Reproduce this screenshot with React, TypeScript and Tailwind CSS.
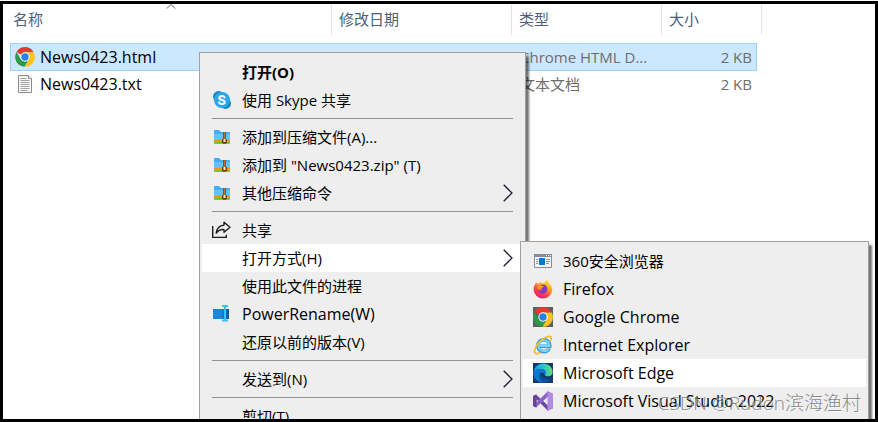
import type { ReactNode } from "react";
import clsx from "clsx";

function ChromeIcon({ boxed = false }: { boxed?: boolean }) {
  return (
    <svg viewBox="0 0 20 20" className="size-5" aria-hidden="true">
      {boxed && <rect width="20" height="20" fill="#5d5f62" />}
      <path d="M10 10 1.5 5A9.8 9.8 0 0 1 18.6 5.2L10 5.4Z" fill="#e33b2e" />
      <path d="M10 10 6 12.4 1.5 5A9.8 9.8 0 0 0 9.6 19.8L14 12.3Z" fill="#2a9a48" />
      <path d="M10 5.4H18.7A9.8 9.8 0 0 1 9.6 19.8L14 12.3Z" fill="#fcc31e" />
      <circle cx="10" cy="10" r="4.7" fill="#fff" />
      <circle cx="10" cy="10" r="3.7" fill="#2d7de9" />
    </svg>
  );
}

function TextFileIcon() {
  return (
    <svg viewBox="0 0 20 20" className="size-5" aria-hidden="true">
      <path d="M3.5 1.5h10l3 3v14h-13z" fill="#f7f7f7" stroke="#8c8c8c" />
      <path d="M13.5 1.5v3h3" fill="#fff" stroke="#8c8c8c" />
      <path d="M5.5 4.5h6M5.5 6.5h9M5.5 8.5h9M5.5 10.5h9M5.5 12.5h9M5.5 14.5h9M5.5 16.5h7" stroke="#a3a3a3" />
    </svg>
  );
}

function SkypeIcon() {
  return (
    <svg viewBox="0 0 20 20" className="size-5" aria-hidden="true">
      <circle cx="6.6" cy="6.6" r="5.6" fill="#1686c4" />
      <circle cx="13.4" cy="13.4" r="5.6" fill="#1583bd" />
      <circle cx="10" cy="10" r="8" fill="#28a8ea" />
      <path
        d="M12.6 7.4c-.5-1-1.5-1.3-2.7-1.3-1.5 0-2.6.7-2.6 1.9 0 2.8 5.500 1.200 5.500 4 0 1.300-1.200 2-2.800 2-1.400 0-2.500-.5-2.900-1.600"
        fill="none"
        stroke="#fff"
        strokeWidth="2"
        strokeLinecap="round"
      />
    </svg>
  );
}

function ZipIcon() {
  return (
    <svg viewBox="0 0 20 20" className="size-5" aria-hidden="true">
      <path d="M2 4Q2 3 3 3h4l2 2h8q1 0 1 1v8H2z" fill="#42aff4" />
      <path d="M2 7h16v7H2z" fill="#5fc4fb" />
      <path d="M2 13h16v2H2z" fill="#f7930f" />
      <path d="M2 15h16v1q0 1-1 1H3q-1 0-1-1z" fill="#7cc52e" />
      <path d="M11 5h3v12h-3z" fill="#9a4c1b" />
      <path d="M12.5 5.5v7" stroke="#d89456" strokeDasharray="1 1" />
      <rect x="10" y="12" width="5" height="4" fill="#7a3a12" />
      <rect x="11.5" y="12" width="2" height="3" fill="#ffe9b8" />
    </svg>
  );
}

function ShareIcon() {
  return (
    <svg viewBox="0 0 20 20" className="size-5" fill="none" stroke="#1c1c1c" strokeWidth="1.400" aria-hidden="true">
      <path d="M.7 6v11.400h13.600v-2.600" />
      <path d="M12 2.200 18 7.300l-6 5V9.600C8.500 9.300 6.200 10.500 4.200 13.200 4.700 8.600 7.600 5.500 12 5.100z" strokeLinejoin="round" />
    </svg>
  );
}

function RenameIcon() {
  return (
    <svg viewBox="0 0 20 20" className="size-5" aria-hidden="true">
      <rect x="1" y="5" width="16" height="10" fill="#1479cf" />
      <path d="M1 5h9v10H1z" fill="#1b86da" />
      <path d="M14.5 5H17v10h-2.500z" fill="#0c5aa8" />
      <path d="M10 2h6M13 2v14M10 16.500h6" fill="none" stroke="#3cc0f3" strokeWidth="2" />
    </svg>
  );
}

function BrowserWindowIcon() {
  return (
    <svg viewBox="0 0 20 20" className="size-5" aria-hidden="true">
      <path d="M1.5 3.5h17v13h-17z" fill="#f8f8f8" stroke="#848b91" />
      <path d="M1 3h18v3H1z" fill="#848b91" />
      <path d="M13 4.5h1M15 4.5h1M17 4.5h1" stroke="#fff" />
      <rect x="6" y="7" width="6" height="7" fill="#0878d8" />
      <path d="M3 8.5h2M3 10.5h2M3 12.5h2M13 8.5h4M13 10.5h4M13 12.5h3" stroke="#8a8f94" />
    </svg>
  );
}

function FirefoxIcon() {
  return (
    <svg viewBox="0 0 20 20" className="size-5" aria-hidden="true">
      <defs>
        <linearGradient id="fox" x1=".8" y1="0" x2=".25" y2="1">
          <stop offset="0" stopColor="#fff14a" />
          <stop offset=".35" stopColor="#ffab20" />
          <stop offset=".65" stopColor="#ff4a3b" />
          <stop offset="1" stopColor="#ef128a" />
        </linearGradient>
      </defs>
      <path
        d="M13 .2c2 1.500 2.700 2.700 3.200 4.200 2.400 1.700 3.400 4.500 3 7.300A9.300 9.300 0 0 1 10 19.500 9.400 9.400 0 0 1 .6 10.700C.5 8.600 1 6.800 2.300 5l.6-1.800 1.700 1.600 2-.6.7-1.400c.6.9 1.400 1.400 2.500 1.700C11.600 3.800 12.700 2.300 13 .2z"
        fill="url(#fox)"
      />
      <path d="M8 6.200c3.500-1.500 6.500 1 6.300 4.200-.2 2.800-2.300 4.400-4.600 4.300-2.700-.1-4.300-1.800-4.300-3.800 1.300.9 3 .8 4.300-.4L7.200 8.800z" fill="#7b3bd0" />
      <path d="M4.800 6.200c1.300-.5 2.700-.2 3.500.6l2.600.5c-.4 1.200-2 1.300-2.500 1.700-.2 1.200-1.500 1.800-3 1.600-.8-1.300-1.200-2.800-.6-4.400z" fill="#ff9824" />
    </svg>
  );
}

function ExplorerIcon() {
  return (
    <svg viewBox="0 0 20 20" className="size-5" fill="none" aria-hidden="true">
      <path d="M16.200 13.200c-1 2.200-2.900 3.400-5.300 3.400-3.600 0-6-2.500-6-5.800s2.500-5.900 6-5.900 5.900 2.400 5.900 6.400H7" stroke="#2b9ddd" strokeWidth="3.600" />
      <path d="M15.800 13.200c-1 2-2.700 3-4.900 3-3.300 0-5.500-2.300-5.500-5.400s2.300-5.500 5.500-5.500 5.500 2.300 5.500 5.600H7" stroke="#7dd6f7" strokeWidth="2" />
      <path d="M16.800 6.500c1.800-2.800 1.900-5-.2-5.200C12.800 1 6.800 5.500 3.600 10.500.9 14.900.8 18.700 3.600 18.700c1.200 0 2.500-.5 4-1.500" stroke="#f2bd27" strokeWidth="1.700" />
    </svg>
  );
}

function EdgeIcon() {
  return (
    <svg viewBox="0 0 20 20" className="size-5" aria-hidden="true">
      <defs>
        <linearGradient id="edge" x1="0" y1=".5" x2="1" y2=".4">
          <stop offset="0" stopColor="#1597df" />
          <stop offset=".55" stopColor="#28c5d6" />
          <stop offset="1" stopColor="#6be35c" />
        </linearGradient>
      </defs>
      <rect width="20" height="20" fill="#143a6b" />
      <path d="M.4 10A9.600 9.600 0 0 1 10 .4c5.500 0 9.600 4 9.600 8.300 0 3-2 4.600-4.500 4.600-2 0-3.300-.7-3.300-1.500 0-.6.8-1 .8-2.400 0-1.700-1.700-3.300-4.500-3.300C4.200 6.100 1.400 7.600.4 10z" fill="url(#edge)" />
      <path d="M.4 10C1 7.500 4 6 7.500 6c2.800 0 5.100 1.500 5.100 3.400 0 1.400-.8 1.800-.8 2.400C10.800 9.800 9.300 9 7.800 10c-3 2-1.300 8.600 3.700 9.500A9.600 9.600 0 0 1 .4 10z" fill="#0d78d4" />
      <path d="M7.800 10c-2.700 2-1.200 8.500 4 9.400 2.700-.3 4.900-1.700 6.400-4-4 1.900-9.900.4-10.400-5.400z" fill="#0a4fa5" />
    </svg>
  );
}

function VisualStudioIcon() {
  return (
    <svg viewBox="0 0 20 20" className="size-5" aria-hidden="true">
      <path d="M0 5 3 3.500 15 14.500V20L3.500 8.300V13L0 15z" fill="#6d489f" />
      <path d="M0 15 3 16.500 15 5.500V0L3.500 11.500 1.500 13z" fill="#8b63c7" />
      <path d="M14.500 0 20 2.500v15L14.500 20z" fill="#b18ae4" />
      <path d="M0 5 3.500 3.500v13L0 15z" fill="#6a4499" />
    </svg>
  );
}

type Entry = {
  label: string;
  icon?: ReactNode;
  bold?: boolean;
  active?: boolean;
  submenu?: boolean;
  latin?: boolean;
};

// Each inner list is a group, groups are split by a rule.
const contextGroups: Entry[][] = [
  [
    { label: "打开(O)", bold: true },
    { label: "使用 Skype 共享", icon: <SkypeIcon /> },
  ],
  [
    { label: "添加到压缩文件(A)...", icon: <ZipIcon /> },
    { label: '添加到 "News0423.zip" (T)', icon: <ZipIcon /> },
    { label: "其他压缩命令", icon: <ZipIcon />, submenu: true },
  ],
  [
    { label: "共享", icon: <ShareIcon /> },
    { label: "打开方式(H)", active: true, submenu: true },
    { label: "使用此文件的进程" },
    { label: "PowerRename(W)", icon: <RenameIcon />, latin: true },
    { label: "还原以前的版本(V)" },
  ],
  [{ label: "发送到(N)", submenu: true }],
  [{ label: "剪切(T)" }],
];

const openWithGroups: Entry[][] = [
  [
    { label: "360安全浏览器", icon: <BrowserWindowIcon /> },
    { label: "Firefox", icon: <FirefoxIcon />, latin: true },
    { label: "Google Chrome", icon: <ChromeIcon boxed />, latin: true },
    { label: "Internet Explorer", icon: <ExplorerIcon />, latin: true },
    { label: "Microsoft Edge", icon: <EdgeIcon />, active: true, latin: true },
    { label: "Microsoft Visual Studio 2022", icon: <VisualStudioIcon />, latin: true },
  ],
];

const files = [
  { name: "News0423.html", type: "Chrome HTML D...", size: "2 KB", icon: <ChromeIcon />, selected: true },
  { name: "News0423.txt", type: "文本文档", size: "2 KB", icon: <TextFileIcon />, selected: false },
];

function MenuItem({ label, icon, bold, active, submenu, latin }: Entry) {
  return (
    <button
      type="button"
      role="menuitem"
      aria-haspopup={submenu ? "menu" : undefined}
      className={clsx(
        "flex h-7 w-full items-center gap-2.5 px-2.5 text-left whitespace-nowrap text-black",
        active && "bg-white",
        bold && "font-bold",
        latin && "text-[16px]",
      )}
    >
      <span className="size-5 shrink-0">{icon}</span>
      <span className="flex-1">{label}</span>
      {submenu && (
        <svg viewBox="0 0 10 18" className="h-[18px] w-2.5" fill="none" stroke="#1c1c34" strokeWidth="1.300" aria-hidden="true">
          <path d="M.7.8 9 9 .7 17.200" />
        </svg>
      )}
    </button>
  );
}

function Menu({ groups, label, className }: { groups: Entry[][]; label: string; className: string }) {
  return (
    <div
      role="menu"
      aria-label={label}
      className={clsx(
        "absolute border border-[#a0a0a0] bg-[#eeeeee] px-0.5 pt-[5px] shadow-[3px_4px_2px_rgba(0,0,0,0.55)]",
        className,
      )}
    >
      {groups.map((group, i) => (
        <div key={i} role="group">
          {i > 0 && <hr className="mx-2.5 my-1 border-t border-[#919191]" />}
          {group.map((entry) => (
            <MenuItem key={entry.label} {...entry} />
          ))}
        </div>
      ))}
    </div>
  );
}

function HeaderCell({ label, className, sorted }: { label: string; className: string; sorted?: boolean }) {
  return (
    <th scope="col" aria-sort={sorted ? "ascending" : undefined} className={clsx("p-0 pb-2 text-left font-normal", className)}>
      <div className="relative flex h-[31px] items-center border-r border-[#e5e5e5] pb-0.5 text-[#4c607a]">
        <button type="button" className={sorted ? "pl-[3px]" : "pl-[7px]"}>
          {label}
        </button>
        {sorted && (
          <svg viewBox="0 0 10 5" className="absolute top-0 left-1/2 h-[5px] w-2.5 -translate-x-1/2" fill="none" stroke="#6e6e6e" aria-hidden="true">
            <path d="M.5 4.700 5 .5l4.500 4.200" />
          </svg>
        )}
      </div>
    </th>
  );
}

function FileList() {
  return (
    <table className="ml-[7px] w-[752px] table-fixed border-collapse">
      <thead>
        <tr>
          <HeaderCell label="名称" className="w-[322px]" sorted />
          <HeaderCell label="修改日期" className="w-[180px]" />
          <HeaderCell label="类型" className="w-[150px]" />
          <HeaderCell label="大小" className="w-[100px]" />
        </tr>
      </thead>
      <tbody>
        {files.map((file) => {
          const cell = clsx(
            "flex items-center border-y",
            file.selected ? "h-7 border-[#99d1ff] bg-[#cce8ff]" : "h-[26px] border-transparent",
          );
          return (
            <tr key={file.name} aria-selected={file.selected} className="text-[#6d6d6d]">
              <td className="p-0">
                <div className={clsx(cell, "gap-[5px] border-l pl-1 text-[16px] text-black")}>
                  {file.icon}
                  {file.name}
                </div>
              </td>
              <td className="p-0">
                <div className={cell} />
              </td>
              <td className="p-0">
                <div className={clsx(cell, "pl-2")}>{file.type}</div>
              </td>
              <td className="p-0">
                <div className={clsx(cell, "mr-[5px] justify-end border-r pr-1")}>{file.size}</div>
              </td>
            </tr>
          );
        })}
      </tbody>
    </table>
  );
}

export default function App() {
  return (
    <div className="h-screen bg-white pt-px font-['Open_Sans','Noto_Sans_CJK_SC',sans-serif] text-[15px] leading-5">
      <main className="relative h-full overflow-hidden border-[3px] border-black">
        <FileList />
        <Menu groups={contextGroups} label="News0423.html" className="top-12 left-[196px] w-[327px]" />
        <Menu groups={openWithGroups} label="打开方式" className="top-[237px] bottom-0 left-[517px] w-[349px] border-b-0" />
        <p className="absolute right-3.5 bottom-1 text-[19px] leading-6 font-light whitespace-nowrap text-[#6b6b6b]/80 [text-shadow:1px_1px_0_rgba(255,255,255,0.6)]">
          CSDN @Rudon滨海渔村
        </p>
      </main>
    </div>
  );
}
